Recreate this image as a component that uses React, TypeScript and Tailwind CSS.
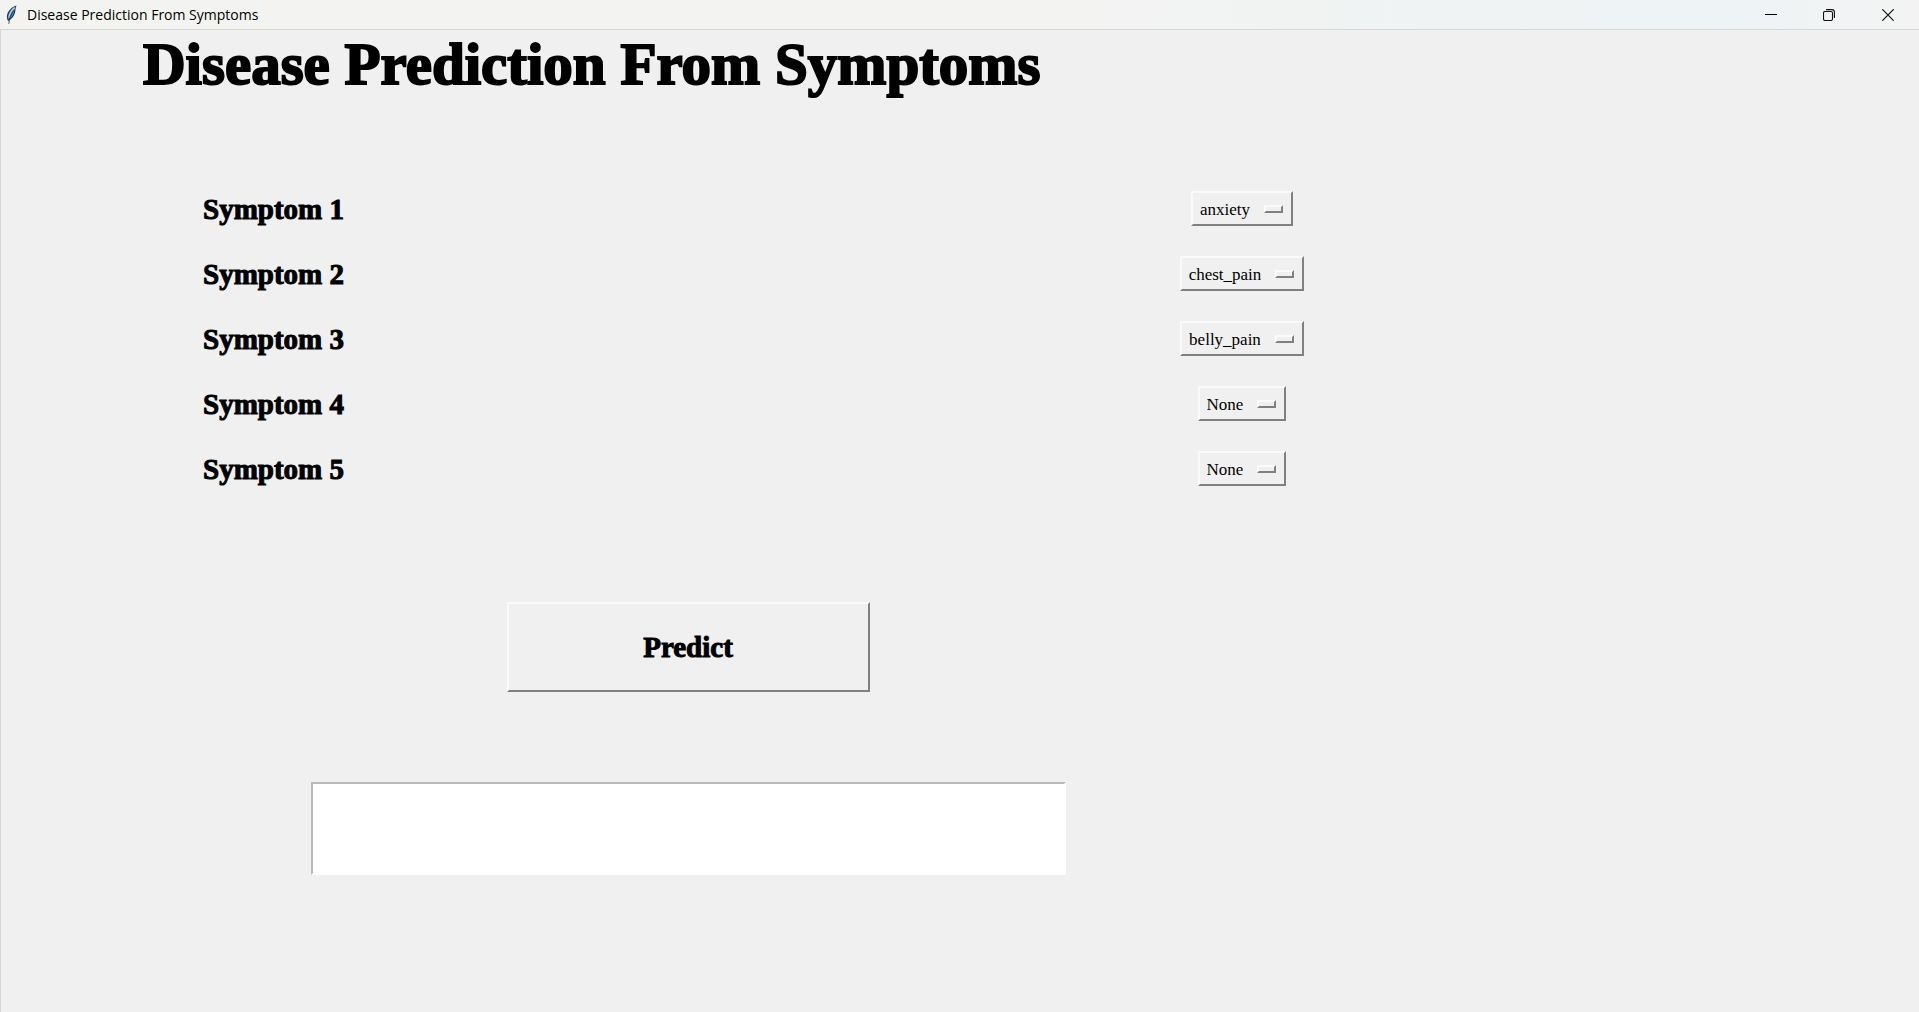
import { useState } from "react";

const OPTIONS = ["None", "anxiety", "belly_pain", "chest_pain"];
const INITIAL = ["anxiety", "chest_pain", "belly_pain", "None", "None"];

const RAISED =
  "border-2 border-t-[#fafafa] border-l-[#fafafa] border-r-[#808080] border-b-[#808080] bg-[#f0f0f0]";

function FeatherIcon() {
  return (
    <svg viewBox="0 0 14 20" className="h-5 w-3.5" aria-hidden="true">
      <path d="M11.5 0.5 C7.5 1.5 3.5 5 2.2 9.5 C1.5 12 2 14.5 3.2 16 C6 14.8 8.5 12 9.8 8.5 C10.8 5.6 10.2 3 11.5 0.5Z" fill="#2c3644" />
      <path d="M10.4 1.6 C7 3.2 4.1 6.6 3.1 10.3 C2.7 12 2.9 13.5 3.5 14.6 C6 13.2 7.8 10.9 8.8 8 C9.7 5.4 9.5 3.6 10.4 1.6Z" fill="#3f7cc9" />
      <path d="M9.6 2.6 C6.6 5 4.6 8.6 3.8 12.6" fill="none" stroke="#a9cdf2" strokeWidth="1.4" />
      <path d="M8.6 5.6 C6.2 9 4.2 13 3.8 18.8" fill="none" stroke="#20262e" strokeWidth="0.8" />
    </svg>
  );
}

function TitleBar() {
  return (
    <header className="flex h-[30px] items-center justify-between border-b border-[#d3d7d7] bg-linear-to-r from-[#f3f3f1] from-50% via-[#eef3f5] via-90% to-[#f3f3f3] pl-[5px] font-['Open_Sans',sans-serif]">
      <div className="flex items-center gap-2">
        <FeatherIcon />
        <span className="text-sm text-black">Disease Prediction From Symptoms</span>
      </div>
      <div className="flex h-full pr-px">
        <button type="button" aria-label="Minimize" className="flex w-[58px] items-center justify-center">
          <svg viewBox="0 0 12 12" className="size-3" aria-hidden="true">
            <path d="M0 5.5H12" stroke="#000" />
          </svg>
        </button>
        <button type="button" aria-label="Restore" className="flex w-[58px] items-center justify-center">
          <svg viewBox="0 0 12 12" className="size-3" fill="none" stroke="#111" aria-hidden="true">
            <rect x="0.5" y="2.5" width="9" height="9" rx="1.5" strokeWidth="1.1" />
            <path d="M3 0.6H9A2.5 2.5 0 0 1 11.4 3V9" strokeWidth="1.1" />
          </svg>
        </button>
        <button type="button" aria-label="Close" className="flex w-[60px] items-center justify-center">
          <svg viewBox="0 0 12 12" className="size-3" stroke="#111" strokeWidth="1.2" aria-hidden="true">
            <path d="M0.3 0.3L11.7 11.7M11.7 0.3L0.3 11.7" />
          </svg>
        </button>
      </div>
    </header>
  );
}

function SymptomRow({ index, initial }: { index: number; initial: string }) {
  const [value, setValue] = useState(initial);
  const id = `symptom-${index}`;
  return (
    <div className="flex h-[65px] items-center justify-between">
      <label
        htmlFor={id}
        className="text-[29px] leading-8 font-bold [-webkit-text-stroke:1px_black]"
      >
        Symptom {index}
      </label>
      <div className="flex w-[266px] justify-center">
        <div className="relative">
          <select
            id={id}
            value={value}
            onChange={(e) => setValue(e.target.value)}
            className={`${RAISED} block h-[35px] appearance-none field-sizing-content pt-[3px] pr-[41px] pl-[7px] text-[17px] leading-5 text-black`}
          >
            {OPTIONS.map((o) => (
              <option key={o}>{o}</option>
            ))}
          </select>
          <span className={`${RAISED} pointer-events-none absolute top-[14px] right-[10px] h-2 w-[19px]`} />
        </div>
      </div>
    </div>
  );
}

export default function App() {
  return (
    <div className="flex min-h-screen flex-col bg-[#f0f0f0] font-['Liberation_Serif',serif] text-black">
      <TitleBar />
      <main className="flex-1 border-l border-[#d3d7d7]">
        <div className="flex w-full max-w-[1374px] flex-col">
          <h1 className="pt-1 pl-[142px] text-[59px] leading-[60px] font-bold whitespace-nowrap [-webkit-text-stroke:2px_black]">
            Disease Prediction From Symptoms
          </h1>
          <form className="flex flex-col" onSubmit={(e) => e.preventDefault()}>
            <div className="mt-[82px] flex flex-col pl-[202px]">
              {INITIAL.map((s, i) => (
                <SymptomRow key={i} index={i + 1} initial={s} />
              ))}
            </div>
            <button
              type="submit"
              className={`${RAISED} mt-[101px] h-[90px] w-[363px] self-center text-[29px] leading-8 font-bold [-webkit-text-stroke:1px_black]`}
            >
              Predict
            </button>
            <textarea
              aria-label="Predicted disease"
              className="mt-[90px] h-[93px] w-[755px] resize-none self-center border-2 border-t-[#b9b9b9] border-r-white border-b-white border-l-[#b9b9b9] bg-white p-1 text-xl outline-none"
            />
          </form>
        </div>
      </main>
    </div>
  );
}
